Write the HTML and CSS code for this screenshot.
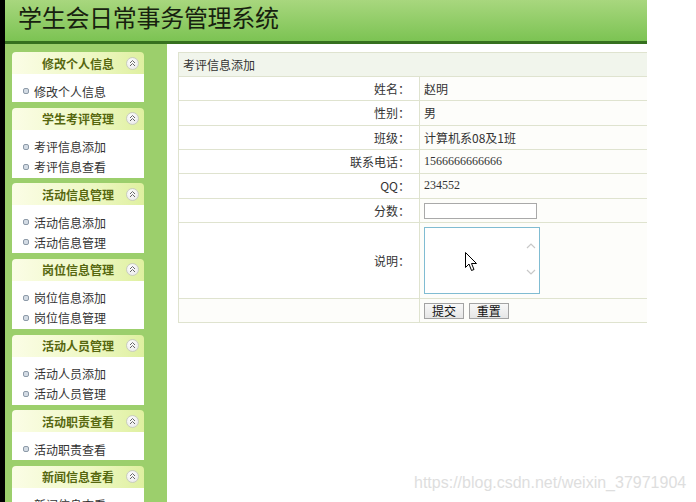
FILE: index.html
```html
<!doctype html>
<html lang="zh-CN">
  <head>
    <meta charset="UTF-8" />
    <title>学生会日常事务管理系统</title>
    <link rel="stylesheet" href="styles.css">
  </head>
  <body>
    <div class="page">
      <header class="top">
        <h1>学生会日常事务管理系统</h1>
      </header>

      <div class="main">
        <aside class="side">
          <div class="panel">
            <div class="panel-head"><span class="title">修改个人信息</span><span class="fold"></span></div>
            <ul class="panel-body">
              <li>修改个人信息</li>
            </ul>
          </div>
          <div class="panel">
            <div class="panel-head"><span class="title">学生考评管理</span><span class="fold"></span></div>
            <ul class="panel-body">
              <li>考评信息添加</li>
              <li>考评信息查看</li>
            </ul>
          </div>
          <div class="panel">
            <div class="panel-head"><span class="title">活动信息管理</span><span class="fold"></span></div>
            <ul class="panel-body">
              <li>活动信息添加</li>
              <li>活动信息管理</li>
            </ul>
          </div>
          <div class="panel">
            <div class="panel-head"><span class="title">岗位信息管理</span><span class="fold"></span></div>
            <ul class="panel-body">
              <li>岗位信息添加</li>
              <li>岗位信息管理</li>
            </ul>
          </div>
          <div class="panel">
            <div class="panel-head"><span class="title">活动人员管理</span><span class="fold"></span></div>
            <ul class="panel-body">
              <li>活动人员添加</li>
              <li>活动人员管理</li>
            </ul>
          </div>
          <div class="panel">
            <div class="panel-head"><span class="title">活动职责查看</span><span class="fold"></span></div>
            <ul class="panel-body">
              <li>活动职责查看</li>
            </ul>
          </div>
          <div class="panel">
            <div class="panel-head"><span class="title">新闻信息查看</span><span class="fold"></span></div>
            <ul class="panel-body">
              <li>新闻信息查看</li>
            </ul>
          </div>
        </aside>

        <section class="content">
          <table class="form">
            <colgroup>
              <col class="label-col">
              <col>
            </colgroup>
            <tr class="caption"><td colspan="2">考评信息添加</td></tr>
            <tr><td class="label">姓名：</td><td>赵明</td></tr>
            <tr><td class="label">性别：</td><td>男</td></tr>
            <tr><td class="label">班级：</td><td>计算机系08及1班</td></tr>
            <tr><td class="label">联系电话：</td><td class="num">1566666666666</td></tr>
            <tr><td class="label">QQ：</td><td class="num">234552</td></tr>
            <tr><td class="label">分数：</td><td><input class="score" type="text"></td></tr>
            <tr class="tall">
              <td class="label">说明：</td>
              <td>
                <div class="memo">
                  <textarea></textarea>
                  <svg class="arrows" width="12" height="36" viewBox="0 0 12 36">
                    <path d="M2 7 L6 3 L10 7" fill="none" stroke="#c8c8c8" stroke-width="1.2"/>
                    <path d="M2 29 L6 33 L10 29" fill="none" stroke="#c8c8c8" stroke-width="1.2"/>
                  </svg>
                  <svg class="cursor" width="13" height="20" viewBox="0 0 13 20">
                    <path d="M0.5 0.5 L0.5 15.5 L4 12 L6.5 18.5 L9 17.5 L6.5 11.5 L11.5 11.5 Z" fill="#fff" stroke="#000" stroke-width="1"/>
                  </svg>
                </div>
              </td>
            </tr>
            <tr><td></td><td><button>提交</button> <button>重置</button></td></tr>
          </table>
        </section>
      </div>
    </div>

    <div class="watermark">https://blog.csdn.net/weixin_37971904</div>
  </body>
</html>
```

FILE: styles.css
```css
body {
  margin: 0;
  padding: 0;
  height: 100vh;
  background-color: #fff;
  color: #333;
  font-family: "Noto Sans CJK SC", "Liberation Sans", sans-serif;
  font-size: 12px;
  overflow: hidden;
}

.page {
  display: flex;
  flex-direction: column;
  width: 642px;
  height: 100%;
  border-left: 5px solid #000;
}

.top {
  flex-shrink: 0;
  height: 41px;
  border-bottom: 3px solid #36701f;
  background: linear-gradient(to bottom, #a8d77e, #7cc353);
}

.top h1 {
  margin: 0;
  padding-left: 13px;
  line-height: 34px;
  font-size: 24px;
  font-weight: 400;
  letter-spacing: -0.3px;
  color: #17210f;
}

.main {
  display: flex;
  flex-grow: 1;
  min-height: 0;
}

/* sidebar */
.side {
  flex-shrink: 0;
  width: 155px;
  padding: 8px 0 0 7px;
  background-color: #9ccf6c;
  overflow: hidden;
}

.panel {
  width: 132px;
  margin-bottom: 5.67px;
}

.panel-head {
  display: grid;
  grid-template-columns: 20px 1fr 20px;
  align-items: center;
  height: 22px;
  border-radius: 4px 4px 0 0;
  background: linear-gradient(to right, #fbfde6, #eef8c4 60%, #dff0a0);
}

.panel-head .title {
  grid-column: 2;
  text-align: center;
  font-weight: bold;
  color: #56670f;
  font-size: 12px;
}

.fold {
  grid-column: 3;
  justify-self: center;
  width: 11px;
  height: 11px;
  border-radius: 50%;
  border: 1px solid #c9cdbf;
  background:
    url("data:image/svg+xml;utf8,<svg xmlns='http://www.w3.org/2000/svg' width='11' height='11'><path d='M3 5 L5.5 2.5 L8 5 M3 8 L5.5 5.5 L8 8' fill='none' stroke='%23666' stroke-width='1'/></svg>") center no-repeat,
    radial-gradient(circle at 40% 35%, #fff, #e4e4e4);
  margin-right: 4px;
}

.panel-body {
  list-style: none;
  margin: 0;
  padding: 7px 0 1px 11px;
  background-color: #fff;
}

.panel-body li {
  display: flex;
  align-items: center;
  gap: 5px;
  height: 20px;
  color: #333;
}

.panel-body li::before {
  content: "";
  width: 4px;
  height: 4px;
  border: 1px solid #8d9aa8;
  border-radius: 2px;
  background-color: #d3dbe4;
}

/* content */
.content {
  flex-grow: 1;
  min-width: 0;
  padding: 8px 0 0 11px;
  overflow: hidden;
}

.form {
  width: 500px;
  border-collapse: collapse;
  table-layout: fixed;
}

.form .label-col {
  width: 241px;
}

.form td {
  height: 23.33px;
  padding: 0 0 0 4px;
  border: 1px solid #dfe3cf;
  background-color: #fdfdfa;
  color: #333;
  white-space: nowrap;
}

.form .caption td {
  height: 23px;
  background-color: #f1f5ec;
  padding-left: 4px;
}

.form td.label {
  padding-right: 9px;
  text-align: right;
  background-color: #fff;
}

.form .num {
  font-family: "Liberation Serif", serif;
  font-size: 12px;
}

.form .tall td {
  height: 75px;
}

.score {
  box-sizing: border-box;
  width: 113px;
  height: 16px;
  margin: 0;
  padding: 0 2px;
  border: 1px solid #a9a9a9;
  background-color: #fff;
}

.memo {
  position: relative;
  width: 116px;
  height: 67px;
}

.memo textarea {
  box-sizing: border-box;
  display: block;
  width: 116px;
  height: 67px;
  margin: 0;
  border: 1px solid #80bcd2;
  resize: none;
  overflow: hidden;
  background-color: #fff;
}

.memo .arrows {
  position: absolute;
  top: 14px;
  right: 3px;
}

.memo .cursor {
  position: absolute;
  top: 25px;
  left: 41px;
}

button {
  height: 16px;
  padding: 0 7px;
  margin: 0 2px 0 0;
  border: 1px solid #a3a3a3;
  background: linear-gradient(to bottom, #f8f8f8, #e6e6e6);
  font-family: "Noto Sans CJK SC", sans-serif;
  font-size: 12px;
  line-height: 14px;
  color: #111;
}

.watermark {
  position: absolute;
  left: 414px;
  top: 474px;
  font-family: "Liberation Sans", Arial, sans-serif;
  font-size: 16px;
  color: #dedede;
  white-space: nowrap;
}
```
